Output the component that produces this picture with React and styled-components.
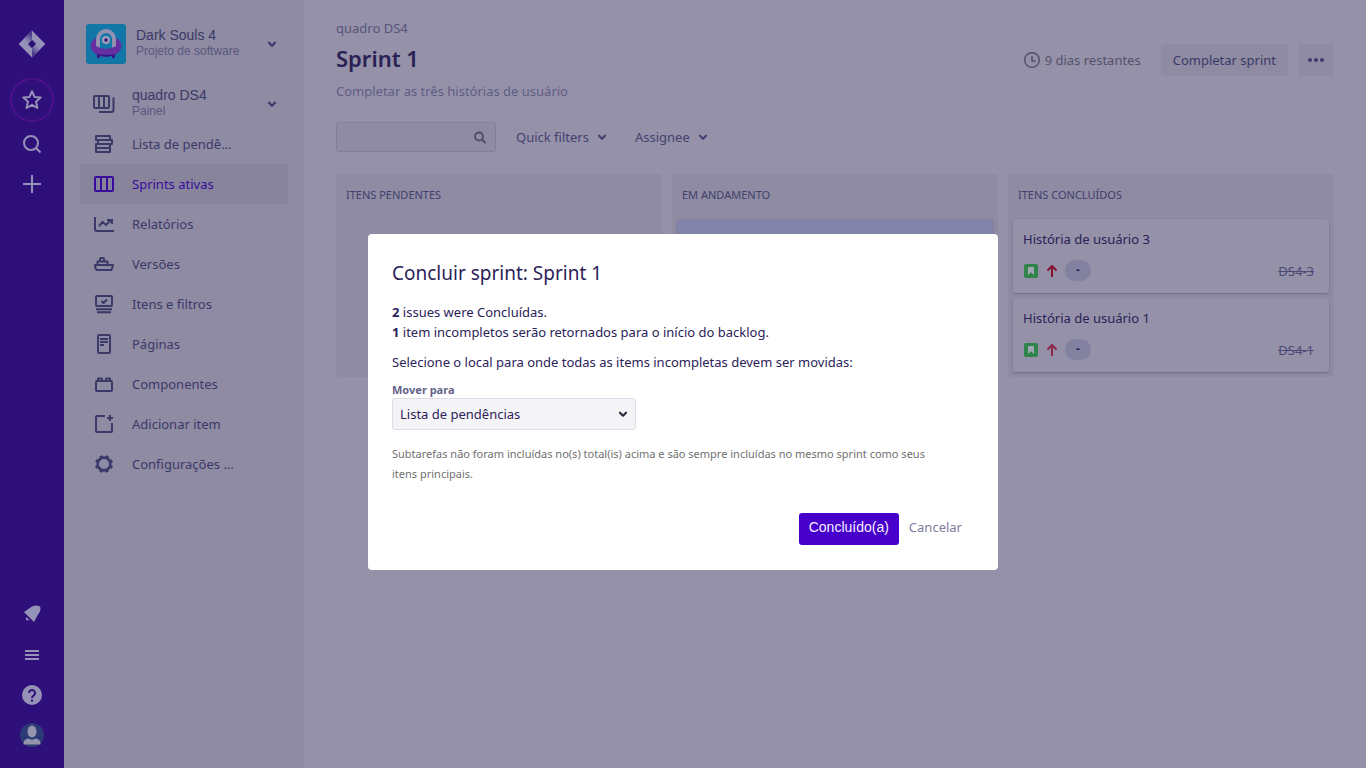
import React from "react";
import styled, { createGlobalStyle, css } from "styled-components";

const sans = `"Noto Sans", "Open Sans", sans-serif`;
const arial = `"Liberation Sans", Arial, sans-serif`;

const c = {
  nav: "#2f0f7a",
  navIcon: "#9592b8",
  side: "#8e8ba3",
  sideHover: "#87849c",
  page: "#9491a8",
  ink: "#2a2156",
  item: "#3b3967",
  muted: "#5a587f",
  accent: "#390c9b",
  modalInk: "#2b2258",
};

const Global = createGlobalStyle`
  *, *::before, *::after { box-sizing: border-box; }
  body { margin: 0; background: ${c.page}; color: ${c.ink}; font: 13px/20px ${sans}; }
  button, input, select { font: inherit; color: inherit; }
  button { border: 0; padding: 0; background: none; cursor: pointer; }
  a { color: inherit; text-decoration: none; }
  h1, h2, h3, p, ul { margin: 0; padding: 0; font-size: inherit; font-weight: 400; }
  ul { list-style: none; }
  svg { display: block; flex: none; }
`;

const Shell = styled.div`
  display: flex;
  min-height: 100vh;
`;

const GlobalNav = styled.nav`
  display: flex;
  flex-direction: column;
  justify-content: space-between;
  width: 64px;
  flex: none;
  padding: 24px 0 13px;
  background: ${c.nav};
  color: ${c.navIcon};
`;

const NavGroup = styled.div`
  display: flex;
  flex-direction: column;
  align-items: center;
`;

const NavButton = styled.button`
  display: grid;
  place-items: center;
  width: 40px;
  height: 40px;
`;

const StarButton = styled(NavButton)`
  width: 44px;
  height: 44px;
  margin: 14px 0 2px;
  border: 2px solid #4c108c;
  border-radius: 50%;
`;

const Sidebar = styled.aside`
  width: 240px;
  flex: none;
  padding: 24px 16px;
  background: ${c.side};
  color: ${c.item};
`;

const Switcher = styled.button`
  display: flex;
  align-items: center;
  width: 100%;
  height: 40px;
  padding: 0 8px 0 ${(p) => (p.$project ? "6px" : "12px")};
  gap: ${(p) => (p.$project ? "10px" : "16px")};
  margin-bottom: ${(p) => (p.$project ? "20px" : "0")};
  font-family: ${arial};
  text-align: left;
`;

const SwitcherText = styled.span`
  display: flex;
  flex-direction: column;
  flex: 1;
  padding-bottom: 2px;
  font-size: 14px;
  line-height: 16px;
`;

const SwitcherSub = styled.small`
  font-size: 12px;
  color: ${c.muted};
`;

const MenuLink = styled.a`
  display: flex;
  align-items: center;
  gap: 16px;
  height: 40px;
  padding: 0 12px;
  border-radius: 3px;
  white-space: nowrap;
  ${(p) =>
    p.$active &&
    css`
      background: ${c.sideHover};
      color: ${c.accent};
    `}
`;

const Main = styled.main`
  flex: 1;
  min-width: 0;
  padding: 18px 32px;
`;

const Crumb = styled.a`
  color: #57547c;
`;

const TitleRow = styled.header`
  display: flex;
  align-items: center;
  justify-content: space-between;
  height: 32px;
  margin-top: 6px;
`;

const Title = styled.h1`
  font-size: 22px;
  line-height: 28px;
  font-weight: 600;
  padding-bottom: 4px;
`;

const Actions = styled.div`
  display: flex;
  align-items: center;
  gap: 10px;
`;

const Remaining = styled.span`
  display: flex;
  align-items: center;
  gap: 4px;
  margin-right: 10px;
  color: #54526c;
`;

const GreyButton = styled.button`
  display: flex;
  align-items: center;
  height: 32px;
  padding: 0 ${(p) => (p.$icon ? "10px" : "12px")};
  border-radius: 3px;
  background: ${c.side};
  color: ${c.item};
`;

const Goal = styled.p`
  margin-top: 5px;
  color: #5f5d86;
`;

const Toolbar = styled.div`
  display: flex;
  align-items: center;
  gap: 20px;
  margin-top: 21px;
`;

const SearchBox = styled.label`
  display: flex;
  align-items: center;
  width: 160px;
  height: 30px;
  padding: 0 8px;
  border: 1px solid #827f98;
  border-radius: 3px;
  background: ${c.side};
  color: #4d4b66;
`;

const SearchInput = styled.input`
  flex: 1;
  min-width: 0;
  border: 0;
  outline: 0;
  background: none;
`;

const FilterButton = styled.button`
  display: flex;
  align-items: center;
  gap: 7px;
  margin-right: 7px;
  color: #444270;
`;

const Board = styled.div`
  display: grid;
  grid-template-columns: repeat(3, 1fr);
  gap: 10px;
  margin-top: 22px;
`;

const Column = styled.section`
  display: flex;
  flex-direction: column;
  gap: 5px;
  padding: 11px 5px 5px;
  border-radius: 3px;
  background: ${c.side};
`;

const ColumnTitle = styled.h2`
  height: 29px;
  padding: 0 5px;
  font-size: 11px;
  line-height: 20px;
  text-transform: uppercase;
  color: #42406c;
`;

const Card = styled.article`
  height: 74px;
  padding: 10px;
  border-radius: 2px;
  background: ${(p) => (p.$selected ? "#8183a8" : c.page)};
  box-shadow: 0 1px 2px #6f6c8a;
`;

const CardFoot = styled.div`
  display: flex;
  align-items: center;
  gap: 7px;
  margin-top: 11px;
`;

const Estimate = styled.span`
  width: 26px;
  height: 21px;
  border-radius: 11px;
  background: #8381a0;
  font-size: 12px;
  line-height: 20px;
  font-weight: 700;
  text-align: center;
`;

const Key = styled.a`
  margin-left: auto;
  padding-right: 5px;
  color: #4e4b76;
  text-decoration: line-through;
`;

const Blanket = styled.div`
  position: fixed;
  inset: 0;
  display: flex;
  align-items: center;
  justify-content: center;
  padding-top: 36px;
`;

const Dialog = styled.form`
  width: 630px;
  max-width: 100%;
  padding: 24px 24px 25px;
  border-radius: 4px;
  background: #fff;
  color: ${c.modalInk};
`;

const DialogTitle = styled.h2`
  margin-bottom: 14px;
  font-size: 19px;
  line-height: 30px;
`;

const Para = styled.p`
  margin-bottom: 10px;
`;

const Label = styled.label`
  display: block;
  font-size: 11px;
  line-height: 16px;
  font-weight: 700;
  color: #65638b;
`;

const SelectWrap = styled.div`
  display: grid;
  width: 244px;
  align-items: center;

  > * {
    grid-area: 1 / 1;
  }
  > svg {
    justify-self: end;
    margin-right: 5px;
    color: #2c2a3c;
    pointer-events: none;
  }
`;

const Select = styled.select`
  appearance: none;
  width: 100%;
  height: 32px;
  padding: 0 7px;
  border: 1px solid #dedce8;
  border-radius: 3px;
  background: #f4f4f7;
`;

const Note = styled.p`
  margin-top: 14px;
  padding-right: 24px;
  font-size: 11px;
  line-height: 20px;
  color: #707070;
`;

const DialogFoot = styled.footer`
  display: flex;
  justify-content: flex-end;
  gap: 9px;
  margin-top: 29px;
  padding-right: 11px;
`;

const Primary = styled.button`
  height: 32px;
  padding: 0 10px 4px;
  border-radius: 3px;
  background: #4700cc;
  color: #f4f0ff;
  font: 14px/28px ${arial};
`;

const Cancel = styled.button`
  height: 28px;
  padding: 0 1px;
  color: #7e7c9e;
`;

const Svg = ({ size = 24, children, ...rest }) => (
  <svg width={size} height={size} viewBox={`0 0 ${size} ${size}`} fill="none" stroke="currentColor" strokeWidth="2" strokeLinejoin="round" aria-hidden="true" {...rest}>
    {children}
  </svg>
);

const Chevron = ({ size = 16, ...rest }) => (
  <Svg size={size} viewBox="0 0 16 16" strokeWidth="2.2" strokeLinecap="round" {...rest}>
    <path d="M5 6.700 8 9.700l3-3" />
  </Svg>
);

const JiraLogo = () => (
  <Svg size={32} stroke="none">
    <defs>
      <linearGradient id="lg1" x1="15" y1="6" x2="9" y2="13" gradientUnits="userSpaceOnUse">
        <stop offset="0" stopColor="#4b3a90" />
        <stop offset="1" stopColor="#9592b8" />
      </linearGradient>
      <linearGradient id="lg2" x1="17" y1="26" x2="23" y2="19" gradientUnits="userSpaceOnUse">
        <stop offset="0" stopColor="#4b3a90" />
        <stop offset="1" stopColor="#9592b8" />
      </linearGradient>
    </defs>
    <path d="M16 2.500 29.300 16 16 29.400 2.700 16Zm0 9.300L11.800 16l4.200 4.200 4.200-4.200Z" fill={c.navIcon} fillRule="evenodd" />
    <path d="M16 2.500v9.300L11.800 16 7.500 11Z" fill="url(#lg1)" />
    <path d="M16 29.400v-9.200l4.200-4.200 4.300 5Z" fill="url(#lg2)" />
  </Svg>
);

const ProjectAvatar = () => (
  <Svg size={40} stroke="none">
    <rect width="40" height="40" rx="3" fill="#1277a6" />
    <path d="M11 30h3v4h-3zM26 30h3v4h-3z" fill="#36158a" />
    <ellipse cx="20" cy="22" rx="15.500" ry="10.500" fill="#642fa0" />
    <path d="M9 29.300c6 4.600 16 4.600 22 0-3 2-17 2-22 0Z" fill="#36158a" />
    <path d="M10 22V15a10 10 0 0 1 20 0v7c-5 3-15 3-20 0Z" fill="#9491b0" />
    <path d="M14 24V15a6 6 0 0 1 12 0v9c-4 1-8 1-12 0Z" fill="#1277a6" />
    <circle cx="20" cy="16" r="4" fill="#a29fb9" />
    <circle cx="20" cy="16" r="1.800" fill="#3a1580" />
  </Svg>
);

const icons = {
  board: (
    <>
      <rect x="2" y="4" width="15" height="12" rx="1" />
      <path d="M7 4v12M12 4v12M21.500 5.500V18a2 2 0 0 1-2 2H7" />
    </>
  ),
  backlog: (
    <path d="M4 4h14v4H4ZM6 8h14v4H6ZM4 12h14v4H4ZM4 16h14v4H4Z" />
  ),
  sprint: (
    <>
      <rect x="3" y="5" width="18" height="14" rx="1" />
      <path d="M9 5v14M15 5v14" />
    </>
  ),
  report: (
    <path d="M3 5v12a2 2 0 0 0 2 2h17M7 14l3.500-4 3.500 3 5-5M15 8h5v4" strokeLinejoin="miter" />
  ),
  ship: (
    <path d="M3 13h18l-1.500 5H5Q3 17 3 13ZM5.500 13V9.500h10V13M8 9.500V7q0-1 1-1h2q1 0 1 1v2.500" />
  ),
  filter: (
    <>
      <rect x="4" y="4" width="16" height="10" rx="1" />
      <path d="m9.500 9 2 2 3.500-3.500M4 17.200h16M5 20.300h14" />
    </>
  ),
  page: (
    <>
      <rect x="6" y="3" width="12" height="18" rx="1" />
      <path d="M8 7h8M8 10h8M8 13h4" />
    </>
  ),
  component: (
    <>
      <rect x="4" y="9" width="16" height="10" rx="1" />
      <path d="M6 9V6.500h4V9M14 9V6.500h4V9" />
    </>
  ),
  add: (
    <path d="M13 4H5a1 1 0 0 0-1 1v14a1 1 0 0 0 1 1h14a1 1 0 0 0 1-1v-8M18 3v6M15 6h6" />
  ),
  gear: (
    <>
      <circle cx="12" cy="12" r="6.400" strokeWidth="2.600" />
      <circle cx="12" cy="12" r="8" strokeDasharray="3 3.283" strokeDashoffset="-1.600" />
    </>
  ),
};

const menu = [
  ["backlog", "Lista de pendê…"],
  ["sprint", "Sprints ativas"],
  ["report", "Relatórios"],
  ["ship", "Versões"],
  ["filter", "Itens e filtros"],
  ["page", "Páginas"],
  ["component", "Componentes"],
  ["add", "Adicionar item"],
  ["gear", "Configurações …"],
];

const columns = [
  { title: "Itens pendentes", cards: [] },
  { title: "Em andamento", cards: [{ n: 2, selected: true }] },
  { title: "Itens concluídos", cards: [{ n: 3, arrow: "#84122f" }, { n: 1, arrow: "#8e274c" }] },
];

const StoryCard = ({ n, selected, arrow = "#84122f" }) => (
  <Card $selected={selected}>
    <h3>História de usuário {n}</h3>
    <CardFoot>
      <Svg size={16} stroke="none">
        <rect x="1" y="1" width="14" height="14" rx="2" fill="#2f8449" />
        <path d="M5 4.500q0-.500.500-.500h5q.500 0 .500.500V12L8 9.300 5 12Z" fill="#a3a7b3" />
      </Svg>
      <Svg size={12} viewBox="2 2 12 12" stroke={arrow} strokeLinejoin="miter">
        <path d="M8 14V3.500M3.500 7.500 8 3l4.500 4.500" />
      </Svg>
      <Estimate>-</Estimate>
      <Key href="#">DS4-{n}</Key>
    </CardFoot>
  </Card>
);

export default function App() {
  return (
    <>
      <Global />
      <Shell>
        <GlobalNav>
          <NavGroup>
            <NavButton aria-label="Jira"><JiraLogo /></NavButton>
            <StarButton aria-label="Favoritos">
              <Svg><path d="m12 3.200 2.500 5.700 6.200.6-4.600 4.100 1.300 6.400L12 16.800 6.600 20l1.300-6.400-4.600-4.100 6.200-.6Z" /></Svg>
            </StarButton>
            <NavButton aria-label="Pesquisar">
              <Svg><circle cx="11" cy="11" r="7" /><path d="m16 16 4.500 4.500" /></Svg>
            </NavButton>
            <NavButton aria-label="Criar">
              <Svg><path d="M12 3v18M3 12h18" /></Svg>
            </NavButton>
          </NavGroup>
          <NavGroup>
            <NavButton aria-label="Notificações">
              <Svg fill="currentColor" stroke="none">
                <path d="M4 9 12 3.500q3.500-1.600 7-.500 1.800.5 1.500 2.500 0 3.500-2.500 6l-4 7.500Zm2 5 3.500 3q-3 1.200-3.500-.500Z" />
              </Svg>
            </NavButton>
            <NavButton aria-label="Menu">
              <Svg><path d="M5 8h14M5 12h14M5 16h14" /></Svg>
            </NavButton>
            <NavButton aria-label="Ajuda">
              <Svg stroke={c.nav}>
                <circle cx="12" cy="12" r="10" fill={c.navIcon} stroke="none" />
                <path d="M9 10a3 3 0 1 1 4.500 2.600Q12 13.500 12 15M12 16.500v2" />
              </Svg>
            </NavButton>
            <NavButton aria-label="Perfil">
              <Svg stroke="none">
                <circle cx="12" cy="12" r="12" fill="#2c3a78" />
                <ellipse cx="12" cy="8.500" rx="4.500" ry="6" fill="#9693ad" />
                <path d="M3.500 21.500q-.500-4 3-5.500 2-.800 3 0 2.500 1.500 5 0 1-.800 3 0 3.500 1.500 3 5.500Z" fill="#9693ad" />
              </Svg>
            </NavButton>
          </NavGroup>
        </GlobalNav>

        <Sidebar>
          <Switcher $project>
            <ProjectAvatar />
            <SwitcherText>
              Dark Souls 4
              <SwitcherSub>Projeto de software</SwitcherSub>
            </SwitcherText>
            <Chevron />
          </Switcher>
          <Switcher>
            <Svg>{icons.board}</Svg>
            <SwitcherText>
              quadro DS4
              <SwitcherSub>Painel</SwitcherSub>
            </SwitcherText>
            <Chevron />
          </Switcher>
          <ul>
            {menu.map(([icon, label]) => (
              <li key={icon}>
                <MenuLink href="#" $active={icon === "sprint"}>
                  <Svg>{icons[icon]}</Svg>
                  {label}
                </MenuLink>
              </li>
            ))}
          </ul>
        </Sidebar>

        <Main>
          <Crumb href="#">quadro DS4</Crumb>
          <TitleRow>
            <Title>Sprint 1</Title>
            <Actions>
              <Remaining>
                <Svg size={18} strokeLinejoin="miter">
                  <circle cx="9" cy="9" r="7.300" strokeWidth="1.500" />
                  <path d="M9 5v5h4" strokeWidth="1.600" />
                </Svg>
                9 dias restantes
              </Remaining>
              <GreyButton>Completar sprint</GreyButton>
              <GreyButton $icon aria-label="Mais">
                <Svg size={16} stroke="none" fill="currentColor">
                  <circle cx="2" cy="8" r="2" /><circle cx="8" cy="8" r="2" /><circle cx="14" cy="8" r="2" />
                </Svg>
              </GreyButton>
            </Actions>
          </TitleRow>
          <Goal>Completar as três histórias de usuário</Goal>
          <Toolbar>
            <SearchBox>
              <SearchInput aria-label="Pesquisar no quadro" />
              <Svg size={14} strokeWidth="1.800"><circle cx="6" cy="6.500" r="4" /><path d="m9 9.500 3.500 3.500" /></Svg>
            </SearchBox>
            <FilterButton>Quick filters <Chevron size={12} viewBox="2 2 12 12" /></FilterButton>
            <FilterButton>Assignee <Chevron size={12} viewBox="2 2 12 12" /></FilterButton>
          </Toolbar>
          <Board>
            {columns.map((col) => (
              <Column key={col.title}>
                <ColumnTitle>{col.title}</ColumnTitle>
                {col.cards.map((card) => <StoryCard key={card.n} {...card} />)}
              </Column>
            ))}
          </Board>
        </Main>
      </Shell>

      <Blanket>
        <Dialog role="dialog" aria-labelledby="dialog-title" onSubmit={(e) => e.preventDefault()}>
          <DialogTitle id="dialog-title">Concluir sprint: Sprint 1</DialogTitle>
          <Para>
            <b>2</b> issues were Concluídas.<br />
            <b>1</b> item incompletos serão retornados para o início do backlog.
          </Para>
          <Para>Selecione o local para onde todas as items incompletas devem ser movidas:</Para>
          <Label htmlFor="target">Mover para</Label>
          <SelectWrap>
            <Select id="target" defaultValue="backlog">
              <option value="backlog">Lista de pendências</option>
            </Select>
            <Chevron />
          </SelectWrap>
          <Note>
            Subtarefas não foram incluídas no(s) total(is) acima e são sempre incluídas no mesmo sprint como seus itens principais.
          </Note>
          <DialogFoot>
            <Primary type="submit">Concluído(a)</Primary>
            <Cancel type="button">Cancelar</Cancel>
          </DialogFoot>
        </Dialog>
      </Blanket>
    </>
  );
}
